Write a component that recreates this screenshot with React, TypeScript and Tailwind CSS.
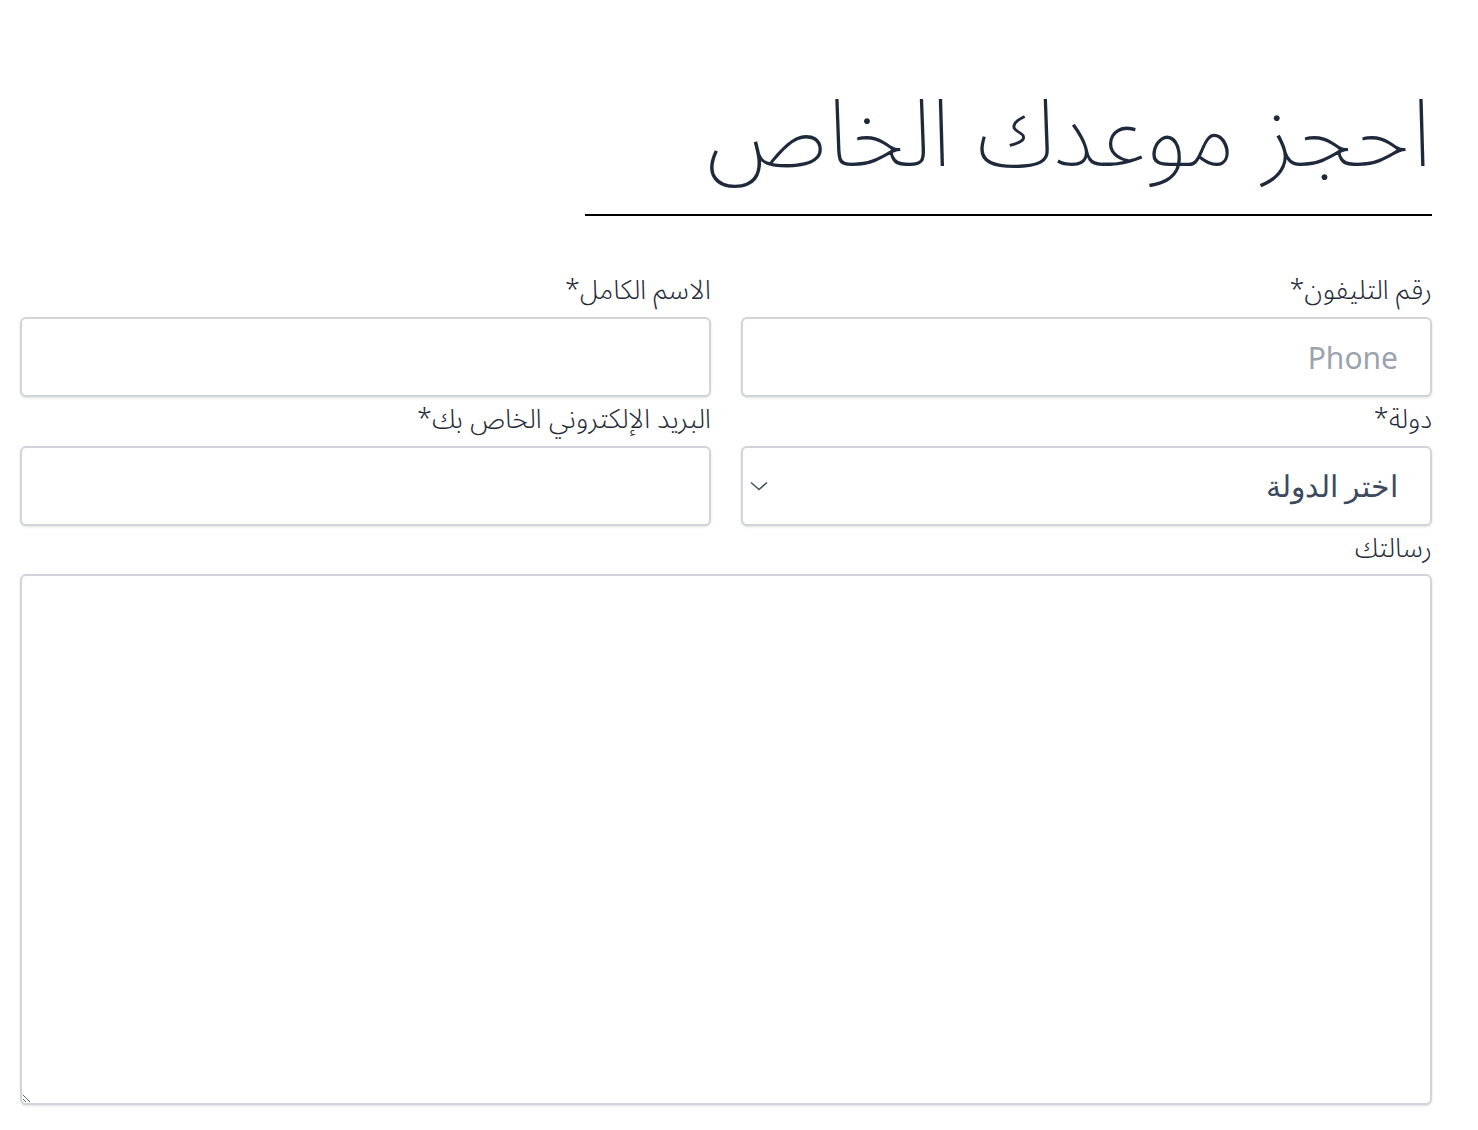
import React from "react";

const labelCls =
  "block h-[49px] pt-[6px] text-[27px] leading-[34px] text-[#1f2937] font-light";
const inputCls =
  "w-full h-[80px] border-2 border-[#d1d5db] rounded-md shadow-sm bg-white px-[32px] text-[30px] text-right text-[#3b4a5e] placeholder:text-[#9ca3af] outline-none";

export default function App() {
  return (
    <div
      dir="rtl"
      className="min-h-[1130px] bg-white pl-5 pr-[46px] pt-[70px]"
      style={{ fontFamily: '"Noto Sans Arabic", "Noto Sans", "DejaVu Sans", sans-serif' }}
    >
      <h1 className="text-[94px] leading-[120px] font-extralight text-[#1e293b] pt-[6px] h-[120px]">
        احجز موعدك الخاص
      </h1>
      <div className="mt-[24px] h-[2px] w-[60%] bg-black" />
      <div className="mt-[52px] grid grid-cols-2 gap-x-[30px]">
        <div>
          <label className={labelCls}>رقم التليفون*</label>
          <input
            type="tel"
            dir="rtl"
            placeholder="Phone"
            className={inputCls}
            style={{ fontFamily: '"Noto Sans", sans-serif' }}
          />
        </div>
        <div>
          <label className={labelCls}>الاسم الكامل*</label>
          <input type="text" className={inputCls} />
        </div>
        <div>
          <label className={labelCls}>دولة*</label>
          <div className="relative">
            <select
              className={inputCls + " appearance-none"}
              style={{ fontFamily: 'serif' }}
              defaultValue=""
            >
              <option value="">اختر الدولة</option>
            </select>
            <svg
              className="pointer-events-none absolute left-[9px] top-1/2 -translate-y-1/2"
              width="18"
              height="10"
              viewBox="0 0 18 10"
              fill="none"
            >
              <path d="M1 1.5 L9 8.5 L17 1.5" stroke="#4b5563" strokeWidth="1.6" />
            </svg>
          </div>
        </div>
        <div>
          <label className={labelCls}>البريد الإلكتروني الخاص بك*</label>
          <input type="email" className={inputCls} />
        </div>
        <div className="col-span-2">
          <label className={labelCls}>رسالتك</label>
          <textarea className="block w-full h-[531px] -mt-[1px] border-2 border-[#d1d5db] rounded-md shadow-sm bg-white outline-none" />
        </div>
      </div>
    </div>
  );
}
